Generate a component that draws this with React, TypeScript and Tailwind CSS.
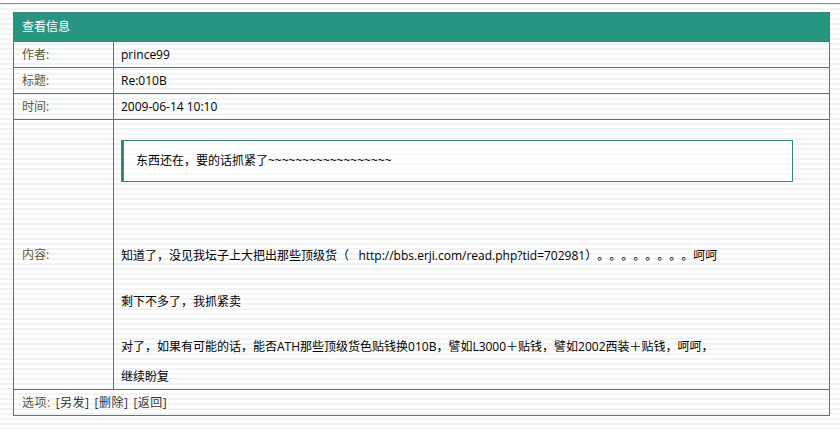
import React from "react";

const font = "font-['Open_Sans','Noto_Sans_CJK_SC',sans-serif]";

const rows = [
  { label: "作者:", value: "prince99" },
  { label: "标题:", value: "Re:010B" },
  { label: "时间:", value: "2009-06-14 10:10" },
];

export default function App() {
  return (
    <div
      className={`${font} [text-spacing-trim:space-all] h-[429px] w-[840px] overflow-hidden bg-[repeating-linear-gradient(to_bottom,#ffffff_0px,#ffffff_3px,#f1f3f3_3px,#f1f3f3_5px)] text-[12px] text-black`}
    >
      <div className="h-[3px]" />
      <div className="h-px bg-[#5e9d99]" />
      <div className="ml-[13px] mt-[8px] w-[817px] border border-[#3a847f]">
        <div className="flex h-[28px] items-center bg-[#289581] pl-[8px] text-white">
          查看信息
        </div>
        {rows.map((r) => (
          <div key={r.label} className="flex h-[26px] border-t border-[#3a847f]">
            <div className="flex w-[100px] items-center border-r border-[#3a847f] pl-[8px] text-[#58583a]">
              {r.label}
            </div>
            <div className="flex flex-1 items-center pl-[7px]">{r.value}</div>
          </div>
        ))}
        <div className="flex h-[270px] border-t border-[#3a847f]">
          <div className="flex w-[100px] items-center border-r border-[#3a847f] pl-[8px] text-[#58583a]">
            内容:
          </div>
          <div className="flex-1 pl-[7px] pr-[36px] pt-[20px] leading-[16px]">
            <div className="flex h-[42px] items-center border border-l-[3px] border-[#36877c] bg-white/60 pl-[12px]">
              东西还在，要的话抓紧了~~~~~~~~~~~~~~~~~~
            </div>
            <p className="mt-[66px] whitespace-nowrap">
              知道了，没见我坛子上大把出那些顶级货（{"\u00a0\u00a0\u00a0"}http://bbs.erji.com/read.php?tid=702981）。。。。。。。。呵呵
            </p>
            <p className="mt-[30px]">剩下不多了，我抓紧卖</p>
            <p className="mt-[29px] whitespace-nowrap">
              对了，如果有可能的话，能否ATH那些顶级货色贴钱换010B，譬如L3000＋贴钱，譬如2002西装＋贴钱，呵呵，
            </p>
            <p className="mt-[14px]">继续盼复</p>
          </div>
        </div>
        <div className="flex h-[26px] items-center border-t border-[#3a847f] pl-[8px] tracking-[0.5px]">
          <span className="text-[#58583a]">选项:</span>
          <span className="ml-[5px] text-[#333]">[另发]</span>
          <span className="ml-[5px] text-[#333]">[删除]</span>
          <span className="ml-[5px] text-[#333]">[返回]</span>
        </div>
      </div>
    </div>
  );
}
